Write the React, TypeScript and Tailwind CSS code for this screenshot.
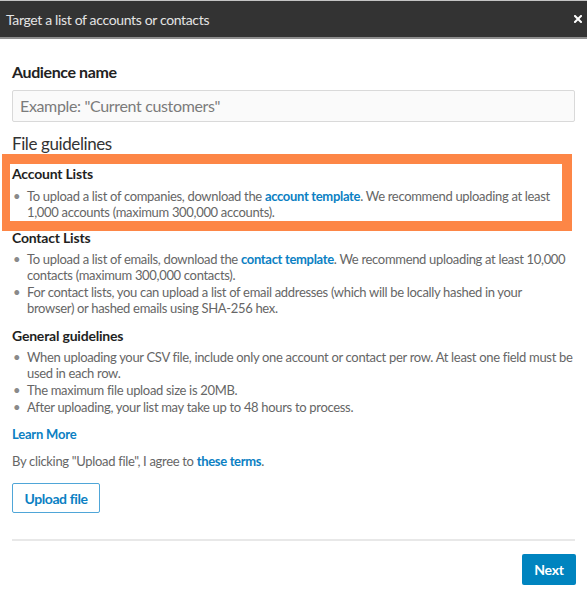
import React from "react";

function Bullet({ children }: { children: React.ReactNode }) {
  return (
    <li className="flex leading-[16px]">
      <span className="w-[15px] shrink-0 pl-[1px] text-[#8a8a8a]">•</span>
      <span className="whitespace-nowrap">{children}</span>
    </li>
  );
}

function Link({ children }: { children: React.ReactNode }) {
  return <a className="font-bold text-[#0b80c3]">{children}</a>;
}

export default function App() {
  return (
    <div className="w-[587px] h-[591px] bg-white font-['Lato',sans-serif] flex flex-col overflow-hidden">
      <div className="h-[39px] shrink-0 border-t border-[#c4c4c4] border-b-2 border-b-[#8e8e8e] bg-[#333333] flex items-center justify-between pl-[6px] pr-[5px]">
        <span className="text-[14px] tracking-[-0.35px] text-[#e4e4e4]">Target a list of accounts or contacts</span>
        <svg width="8" height="8" viewBox="0 0 8 8" className="text-white">
          <path d="M1 1L7 7M7 1L1 7" stroke="currentColor" strokeWidth="2" strokeLinecap="square" />
        </svg>
      </div>

      <div className="flex flex-col px-[12px]">
        <div className="mt-[23px] text-[16px] leading-[20px] font-bold tracking-[-0.4px] text-[#222]">Audience name</div>
        <div className="mt-[8px] h-[32px] border border-[#d9d9d9] bg-[#fafafa] rounded-[2px] px-[7px] flex items-center">
          <span className="text-[16px] tracking-[-0.35px] text-[#7b7b7b]">Example: "Current customers"</span>
        </div>
        <div className="mt-[12px] text-[17px] leading-[20px] tracking-[-0.4px] text-[#333]">File guidelines</div>

        <div className="-mx-[10px] w-[570px] border-[10px] border-l-[8px] border-[#fd8646] pl-[2px] pt-[2px] pb-[1px] tracking-[-0.32px]">
          <div className="text-[14px] leading-[16px] font-bold tracking-[-0.2px] text-[#1f1f1f]">Account Lists</div>
          <ul className="mt-[6px] text-[13px] text-[#666]">
            <Bullet>
              To upload a list of companies, download the <Link>account template</Link>. We recommend uploading at least
              <br />
              1,000 accounts (maximum 300,000 accounts).
            </Bullet>
          </ul>
        </div>

        <div className="-mt-[1px] text-[14px] leading-[16px] font-bold tracking-[-0.2px] text-[#1f1f1f]">Contact Lists</div>
        <ul className="mt-[5px] text-[13px] text-[#666] tracking-[-0.32px] flex flex-col gap-[1px]">
          <Bullet>
            To upload a list of emails, download the <Link>contact template</Link>. We recommend uploading at least 10,000
            <br />
            contacts (maximum 300,000 contacts).
          </Bullet>
          <Bullet>
            For contact lists, you can upload a list of email addresses (which will be locally hashed in your
            <br />
            browser) or hashed emails using SHA-256 hex.
          </Bullet>
        </ul>

        <div className="mt-[12px] text-[14px] leading-[16px] font-bold tracking-[-0.2px] text-[#1f1f1f]">General guidelines</div>
        <ul className="mt-[5px] text-[13px] text-[#666] tracking-[-0.32px] flex flex-col gap-[1px]">
          <Bullet>
            When uploading your CSV file, include only one account or contact per row. At least one field must be
            <br />
            used in each row.
          </Bullet>
          <Bullet>The maximum file upload size is 20MB.</Bullet>
          <Bullet>After uploading, your list may take up to 48 hours to process.</Bullet>
        </ul>

        <div className="mt-[11px] text-[13px] leading-[16px] tracking-[-0.2px]">
          <Link>Learn More</Link>
        </div>
        <div className="mt-[11px] text-[13px] leading-[16px] tracking-[-0.32px] text-[#666]">
          By clicking "Upload file", I agree to <Link>these terms</Link>.
        </div>

        <button className="mt-[14px] self-start h-[30px] w-[88px] border border-[#4fa6d8] rounded-[2px] text-[14px] font-bold tracking-[-0.4px] text-[#0b80c3] flex items-center justify-center">
          Upload file
        </button>

        <div className="mt-[26px] h-[2px] bg-[#e8e8e8]" />

        <button className="mt-[13px] self-end -mr-[1px] h-[31px] w-[54px] bg-[#0084bf] rounded-[2px] text-[14px] font-bold tracking-[-0.2px] text-white flex items-center justify-center">
          Next
        </button>
      </div>
    </div>
  );
}
